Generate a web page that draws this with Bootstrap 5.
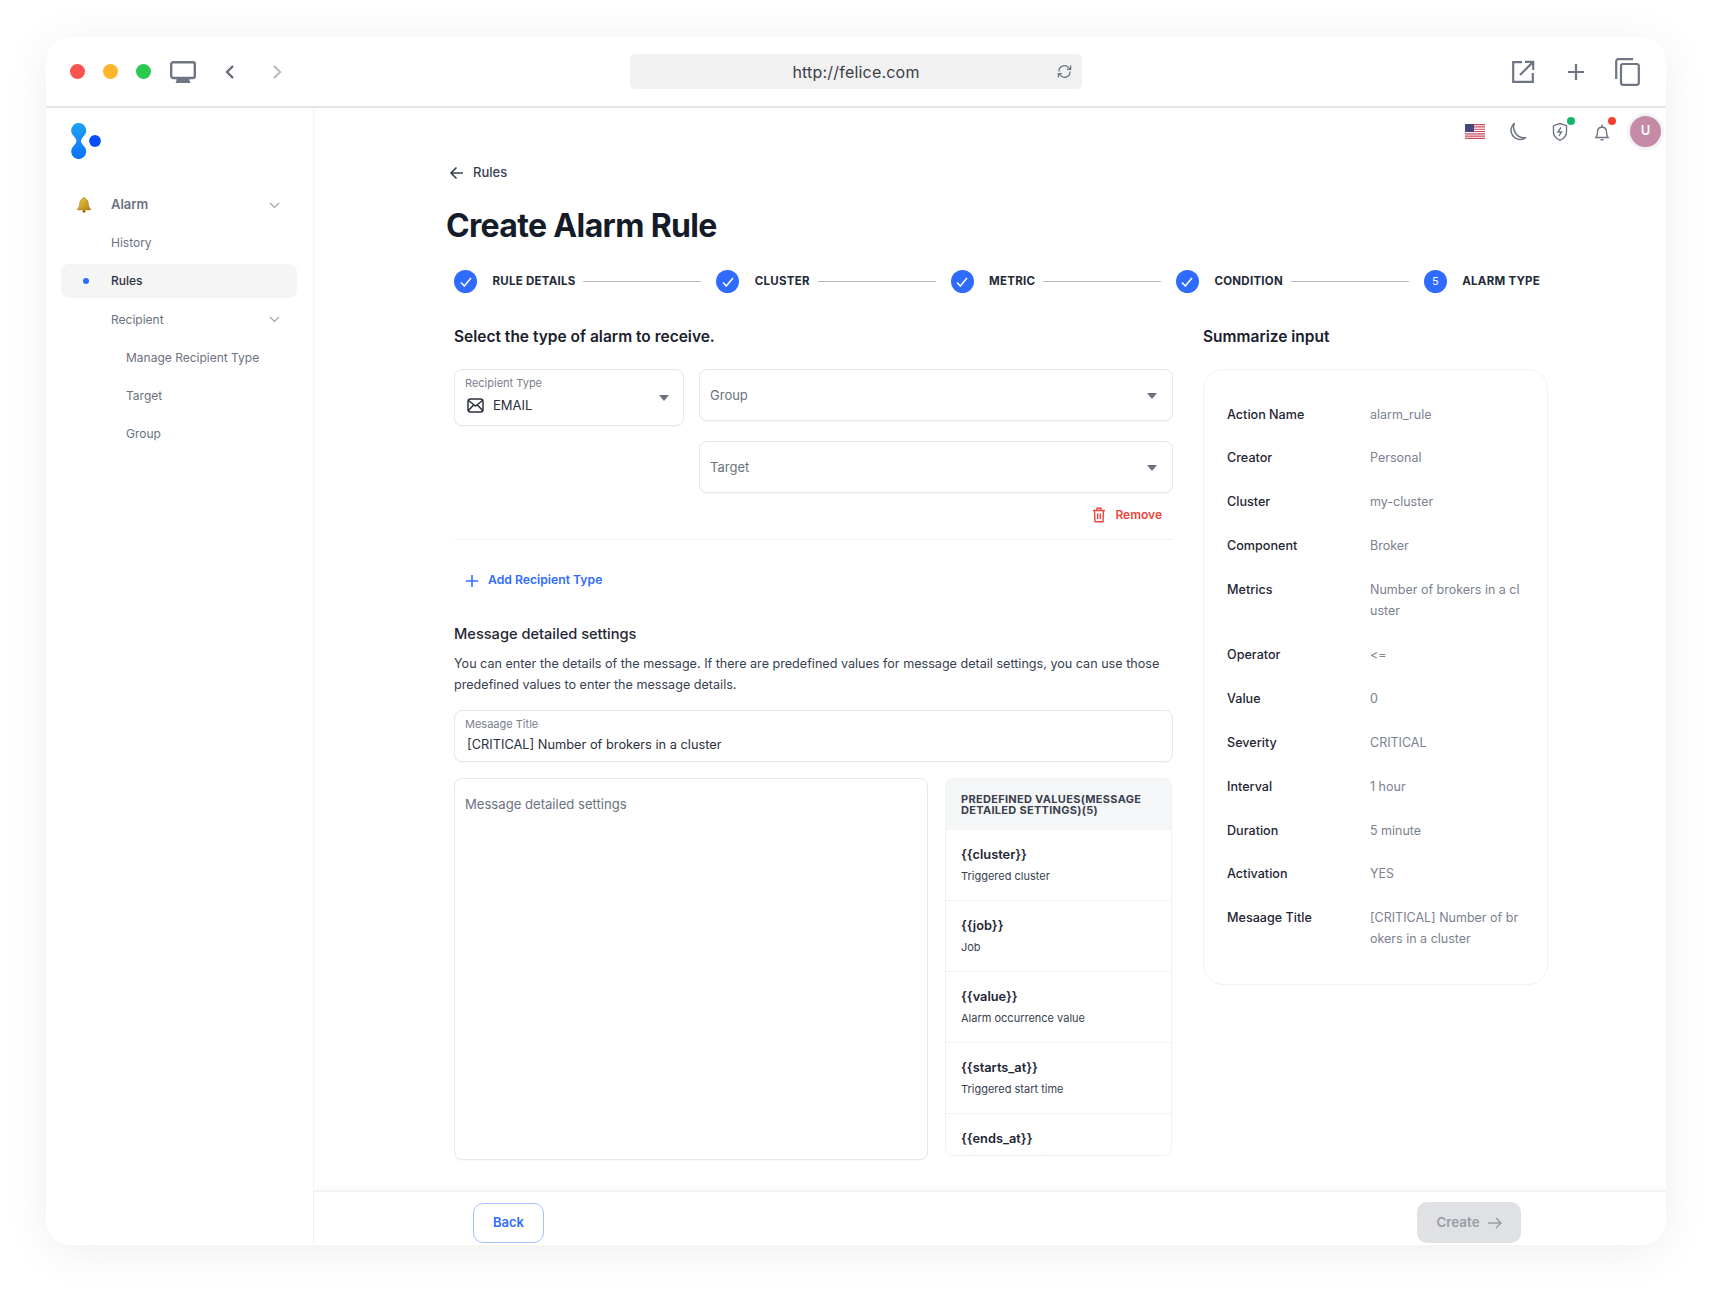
<!DOCTYPE html>
<html lang="en">

<head>
  <meta charset="UTF-8" />
  <meta name="viewport" content="width=device-width, initial-scale=1" />
  <title>Create Alarm Rule</title>
  <link href="https://cdn.jsdelivr.net/npm/bootstrap@5.3.2/dist/css/bootstrap.min.css" rel="stylesheet" />
  <style>
    body {
      font-family: Inter, "Liberation Sans", sans-serif;
      background: #fff;
      color: #1a202c;
      height: 1300px;
      overflow: hidden;
    }

    /* Browser mockup */
    .browser-frame {
      width: 1620px;
      height: 1208px;
      margin: 37px 0 0 46px;
      border-radius: 24px;
      background: #fff;
      box-shadow: 0 6px 46px rgb(0 0 0 / 0.07);
      overflow: hidden;
    }

    .browser-bar {
      height: 71px;
      padding-left: 24px;
      border-bottom: 2px solid #e4e4e4;
    }

    .win-dot {
      width: 15px;
      height: 15px;
      border-radius: 50%;
      margin-right: 18px;
    }

    .address-box {
      position: relative;
      width: 452px;
      height: 35px;
      margin-left: 346px;
      background: #f1f1f1;
      border-radius: 5px;
      font-size: 16px;
      letter-spacing: .2px;
      color: #3c4048;
    }

    .address-box svg {
      position: absolute;
      right: 9px;
      top: 9px;
    }

    /* Sidebar */
    .side-col {
      width: 268px;
      flex: none;
      border-right: 1px solid #f3f3f5;
    }

    .side-logo {
      margin: 15px 0 0 25px;
      height: 36px;
    }

    .side-menu {
      margin: 29px 0 0 15px;
      width: 236px;
      font-size: 12px;
      color: #6b7280;
    }

    .side-item {
      height: 34px;
      margin-bottom: 4.2px;
      padding-left: 50px;
      padding-right: 13px;
      position: relative;
      border-radius: 8px;
    }

    .side-item.sub {
      padding-left: 65px;
    }

    .side-item.top-item {
      font-size: 13px;
      font-weight: 600;
    }

    .side-item.selected {
      background: #f5f5f6;
      color: #2d3340;
      font-weight: 500;
    }

    .side-item.selected::before {
      content: "";
      position: absolute;
      left: 22px;
      top: 14px;
      width: 6px;
      height: 6px;
      border-radius: 50%;
      background: #2f6bff;
    }

    /* Main */
    .main-col {
      min-width: 0;
    }

    .top-tools {
      height: 46px;
      padding-right: 2px;
    }

    .avatar-u {
      width: 37px;
      height: 37px;
      margin-left: 14px;
      border-radius: 50%;
      background: #c58aa6;
      border: 3px solid #f1f3f7;
      color: #fff;
      font-size: 13px;
      font-weight: 600;
    }

    .tool-icon {
      position: relative;
      width: 20px;
      height: 22px;
      margin-top: -3px;
    }

    .tool-dot {
      position: absolute;
      width: 8px;
      height: 8px;
      border-radius: 50%;
      right: -5px;
      top: -2px;
    }

    .page-area {
      padding-left: 133px;
      width: 1240px;
    }

    .back-link {
      font-size: 13px;
      font-weight: 500;
      color: #374151;
      height: 22px;
      margin: 8px 0 0 2px;
    }

    .page-title {
      font-size: 32px;
      font-weight: 700;
      letter-spacing: -.65px;
      color: #141b29;
      line-height: 40px;
      margin: 22px 0 0 -1px;
    }

    .step-row {
      margin: 24px 0 0 7px;
      height: 23px;
      width: 1086px;
    }

    .step-num {
      width: 23px;
      height: 23px;
      flex: none;
      border-radius: 50%;
      background: #2f6bff;
      color: #fff;
      font-size: 11px;
      margin-right: 15.5px;
    }

    .step-name {
      font-size: 11.5px;
      font-weight: 700;
      letter-spacing: .25px;
      color: #232a38;
      white-space: nowrap;
    }

    .step-line {
      flex: 1;
      height: 1px;
      margin: 0 15px 0 8px;
      background: #b4b7bd;
    }

    .form-part {
      width: 719px;
      flex: none;
    }

    .sum-part {
      width: 345px;
      flex: none;
      margin-left: 30px;
    }

    .section-head {
      font-size: 15.5px;
      font-weight: 600;
      color: #1a202c;
      line-height: 22px;
      margin: 0 0 20.5px;
    }

    .body-wrap {
      margin: 33px 0 0 7px;
    }

    .field-box {
      border: 1px solid #e6e7eb;
      border-radius: 8px;
      background: #fff;
      box-shadow: 0 1px 1px rgb(0 0 0 / 0.03);
      position: relative;
    }

    .field-cap {
      font-size: 11px;
      color: #7a808c;
      line-height: 14px;
    }

    .pick-select {
      height: 52px;
      font-size: 13px;
      color: #6b7280;
      border-color: #e6e7eb;
      border-radius: 8px;
      padding: 8px 36px 6px 10px;
      box-shadow: 0 1px 1px rgb(0 0 0 / 0.03);
      background-image: none;
    }

    .caret-down {
      position: absolute;
      right: 16px;
      top: 24px;
      width: 0;
      height: 0;
      border-left: 5px solid transparent;
      border-right: 5px solid transparent;
      border-top: 6px solid #6b7280;
      pointer-events: none;
    }

    .caret-down.in-type {
      right: 14px;
      top: 25px;
    }

    .remove-link {
      font-size: 12px;
      font-weight: 600;
      color: #f0443a;
      height: 20px;
      margin-top: 12px;
      padding-right: 11px;
    }

    .dot-rule {
      border-top: 1px dotted #e3e4e8;
      margin: 14.5px 0 0;
    }

    .add-link {
      font-size: 12.2px;
      font-weight: 600;
      color: #2f6bff;
      height: 20px;
      margin: 30.5px 0 0 12px;
    }

    .msg-head {
      font-size: 14.6px;
      font-weight: 500;
      color: #1f2633;
      margin: 32px 0 0;
      line-height: 22px;
    }

    .msg-text {
      font-size: 12.6px;
      line-height: 21px;
      color: #374151;
      margin: 8px 0 0;
    }

    .title-input {
      height: 52px;
      margin-top: 15px;
      padding: 6px 10px 0;
    }

    .title-value {
      font-size: 12.8px;
      color: #2a303c;
      line-height: 20px;
      margin: 4px 0 0 2px;
    }

    .msg-area {
      width: 474px;
      height: 382px;
      flex: none;
      resize: none;
      border-color: #e6e7eb;
      border-radius: 8px;
      padding: 16px 10px;
      font-size: 13.1px;
      box-shadow: 0 1px 1px rgb(0 0 0 / 0.03);
    }

    .msg-area::placeholder {
      color: #6b7280;
    }

    .value-panel {
      width: 227px;
      height: 378px;
      margin-left: 17px;
      flex: none;
      border: 1px solid #f0f1f3;
      border-radius: 8px;
      overflow: hidden;
    }

    .value-head {
      height: 51px;
      background: #f5f6f8;
      padding: 15px 12px 0 15px;
      font-size: 11px;
      line-height: 11.5px;
      font-weight: 700;
      letter-spacing: .3px;
      color: #3a414e;
    }

    .value-row {
      height: 71px;
      padding: 15px 15px 0;
      border-color: #f2f3f5;
    }

    .value-key {
      font-size: 12.8px;
      font-weight: 600;
      color: #1f2633;
      line-height: 20px;
    }

    .value-desc {
      font-size: 11px;
      color: #374151;
      line-height: 16px;
      margin-top: 3px;
    }

    .sum-box {
      border: 1px solid #f1f2f4;
      border-radius: 20px;
      height: 616px;
      padding: 34px 23px;
    }

    .sum-row {
      margin-bottom: 22.9px;
      font-size: 12.6px;
      line-height: 21px;
    }

    .sum-key {
      width: 143px;
      flex: none;
      font-weight: 500;
      color: #1f2633;
    }

    .sum-val {
      width: 150px;
      font-size: 12.5px;
      color: #7b8190;
      word-break: break-all;
    }

    .foot-bar {
      height: 55px;
      flex: none;
      border-top: 2px solid #f3f3f4;
      box-shadow: 0 -3px 6px rgb(0 0 0 / 0.02);
      padding: 10px 145px 0 159px;
    }

    .back-btn {
      width: 71px;
      height: 40px;
      margin-top: 1px;
      border: 1px solid #a9c2ff;
      border-radius: 10px;
      background: #fff;
      color: #2f6bff;
      font-size: 13px;
      font-weight: 600;
      padding: 0;
    }

    .create-btn {
      width: 104px;
      height: 41px;
      border: 0;
      border-radius: 10px;
      background: #e0e1e5;
      color: #9a9ca5;
      font-size: 13.4px;
      font-weight: 600;
      padding: 0;
    }
  </style>
</head>

<body>
  <div class="browser-frame d-flex flex-column">

    <!-- browser toolbar -->
    <div class="browser-bar d-flex align-items-center flex-none">
      <span class="win-dot" style="background:#f8534f"></span>
      <span class="win-dot" style="background:#fdb52a"></span>
      <span class="win-dot" style="background:#2bc94f"></span>
      <svg width="26" height="22" viewBox="0 0 26 22" style="margin-left:1px">
        <rect x="1.200" y="1.200" width="23.600" height="15.800" rx="2" fill="none" stroke="#6f7683" stroke-width="2.400" />
        <path d="M6.500 18h13v1.500l1 2.500h-15l1-2.500z" fill="#6f7683" />
      </svg>
      <svg width="12" height="16" viewBox="0 0 12 16" style="margin-left:27px">
        <path d="M10 2 4 8l6 6" fill="none" stroke="#5f6673" stroke-width="2.200" />
      </svg>
      <svg width="12" height="16" viewBox="0 0 12 16" style="margin-left:37px">
        <path d="M2 2l6 6-6 6" fill="none" stroke="#b9bcc2" stroke-width="2.200" />
      </svg>
      <div class="address-box d-flex align-items-center justify-content-center">
        http://felice.com
        <svg width="17" height="17" viewBox="0 0 17 17" fill="none" stroke="#6f7683" stroke-width="1.300">
          <path d="M3 8.500A5.500 5.500 0 0 1 12.600 4.600L14 6" />
          <path d="M14 8.500A5.500 5.500 0 0 1 4.400 12.400L3 11" />
          <path d="M14.600 2.600V6.400H11M2.400 14.400V10.600H6" />
        </svg>
      </div>
      <div class="ms-auto d-flex align-items-center">
        <svg width="24" height="24" viewBox="0 0 24 24" fill="none" stroke="#6f7683" stroke-width="2.200">
          <path d="M11 2.200H2.200v19.600h19.600V13" />
          <path d="M9 15 21.600 2.400M14 1.800h8.200V10" />
        </svg>
        <svg width="18" height="18" viewBox="0 0 18 18" style="margin-left:32px" stroke="#6f7683" stroke-width="2.200">
          <path d="M9 1v16M1 9h16" />
        </svg>
        <svg width="25" height="28" viewBox="0 0 25 28" fill="none" stroke="#6f7683" stroke-width="2.200"
          style="margin-left:30px;margin-right:26px">
          <path d="M1.200 21V3.200a2 2 0 0 1 2-2H18" />
          <rect x="6" y="6" width="17.800" height="20.800" rx="2" />
        </svg>
      </div>
    </div>

    <div class="d-flex flex-grow-1" style="min-height:0">

      <!-- sidebar -->
      <aside class="side-col">
        <div class="side-logo">
          <svg width="30" height="36" viewBox="0 0 30 36">
            <defs>
              <linearGradient id="logoA" x1="0" y1="0" x2="0" y2="1">
                <stop offset="0" stop-color="#1ea3f5" />
                <stop offset="1" stop-color="#0a72fb" />
              </linearGradient>
              <linearGradient id="bellGold" x1="0" y1="0" x2="1" y2="1">
                <stop offset="0" stop-color="#f0c84a" />
                <stop offset="1" stop-color="#b0820f" />
              </linearGradient>
            </defs>
            <path fill="url(#logoA)" d="M7.700 0A7.500 7.500 0 0 1 13.500 12.200C11 15 10 16 10 18C10 20 11 21 13.500 23.800A7.500 7.500 0 1 1 1.900 23.800C4.400 21 5.400 20 5.400 18C5.400 16 4.400 15 1.900 12.200A7.500 7.500 0 0 1 7.700 0Z" />
            <circle cx="24" cy="18" r="5.900" fill="#0a4dfb" />
          </svg>
        </div>
        <nav class="side-menu d-flex flex-column">
          <div class="side-item top-item d-flex align-items-center">
            <svg width="16" height="16" viewBox="0 0 16 16" style="position:absolute;left:15px;top:9px">
              <path d="M8 .5c1 0 1.300.7 1.300 1.300 2.200.7 2.900 2.500 3 4.700.1 2.500 1 4.200 2.200 5.400v1H1.500v-1c1.200-1.200 2.100-2.900 2.200-5.400.1-2.200.8-4 3-4.700C6.700 1.200 7 .5 8 .5z" fill="url(#bellGold)" stroke="#9a7414" stroke-width=".5" />
              <circle cx="8" cy="14.300" r="1.500" fill="#9a7414" />
            </svg>
            Alarm
            <svg width="11" height="7" viewBox="0 0 11 7" class="ms-auto" style="margin-right:4px">
              <path d="M1 1l4.500 4.500L10 1" fill="none" stroke="#9ca3af" stroke-width="1.200" />
            </svg>
          </div>
          <div class="side-item d-flex align-items-center">History</div>
          <div class="side-item selected d-flex align-items-center">Rules</div>
          <div class="side-item d-flex align-items-center">Recipient
            <svg width="11" height="7" viewBox="0 0 11 7" class="ms-auto" style="margin-right:4px">
              <path d="M1 1l4.500 4.500L10 1" fill="none" stroke="#9ca3af" stroke-width="1.200" />
            </svg>
          </div>
          <div class="side-item sub d-flex align-items-center">Manage Recipient Type</div>
          <div class="side-item sub d-flex align-items-center">Target</div>
          <div class="side-item sub d-flex align-items-center">Group</div>
        </nav>
      </aside>

      <main class="main-col flex-grow-1 d-flex flex-column">
        <div class="flex-grow-1">
          <!-- app top icons -->
          <div class="top-tools d-flex align-items-center justify-content-end">
            <svg width="20" height="15" viewBox="0 0 20 15">
              <rect width="20" height="15" fill="#fff" />
              <path d="M0 .6h20M0 2.900h20M0 5.200h20M0 7.500h20M0 9.800h20M0 12.100h20M0 14.400h20" stroke="#c9475a" stroke-width="1.150" />
              <rect width="9" height="8" fill="#45477e" />
            </svg>
            <span class="tool-icon" style="margin-left:22px">
              <svg width="20" height="22" viewBox="0 0 20 22" fill="none" stroke="#6f7683" stroke-width="1.500">
                <path d="M7.500 2A9 9 0 1 0 19 16.500 10.500 10.500 0 0 1 7.500 2z" />
              </svg>
            </span>
            <span class="tool-icon" style="margin-left:24px">
              <svg width="18" height="22" viewBox="0 0 18 22" fill="none" stroke="#6f7683" stroke-width="1.400">
                <path d="M9 2.500l6.500 2.200v6.300c0 4-2.800 6.700-6.500 8.300-3.700-1.600-6.500-4.300-6.500-8.300V4.700z" />
                <path d="M10 6.500 7 11h3.500L8 15" />
              </svg>
              <span class="tool-dot" style="background:#12b76a;right:-4px"></span>
            </span>
            <span class="tool-icon" style="margin-left:22px">
              <svg width="18" height="22" viewBox="0 0 18 22" fill="none" stroke="#6f7683" stroke-width="1.400">
                <path d="M3 16.500c1.200-1.500 1.400-3 1.500-5.500.1-2.800 1.800-4.700 4.500-4.700s4.400 1.900 4.500 4.700c.1 2.500.3 4 1.500 5.500z" />
                <path d="M9 3.500v2.500M7.500 18.800h3" />
              </svg>
              <span class="tool-dot" style="background:#f5402f;right:-3px"></span>
            </span>
            <span class="avatar-u d-flex align-items-center justify-content-center">U</span>
          </div>

          <div class="page-area">
            <div class="back-link d-flex align-items-center">
              <svg width="15" height="14" viewBox="0 0 15 14" fill="none" stroke="#374151" stroke-width="1.600" style="margin-right:9px">
                <path d="M14 7H2M7.500 1.500 2 7l5.500 5.500" />
              </svg>
              <span>Rules</span>
            </div>
            <h1 class="page-title">Create Alarm Rule</h1>

            <!-- stepper -->
            <div class="step-row d-flex align-items-center" id="stepRow"></div>

            <div class="body-wrap d-flex">
              <div class="form-part">
                <h2 class="section-head">Select the type of alarm to receive.</h2>

                <div class="d-flex align-items-start">
                  <div class="field-box" style="width:230px;height:57px;padding:6px 10px;flex:none">
                    <div class="field-cap">Recipient Type</div>
                    <div class="d-flex align-items-center" style="font-size:13px;color:#2a303c;margin-top:6px">
                      <svg width="17" height="15" viewBox="0 0 17 15" fill="none" stroke="#2a303c" stroke-width="1.500" style="margin:0 9px 0 2px">
                        <rect x="1" y="1" width="15" height="13" rx="2.500" />
                        <path d="M1.500 2.500 8.500 8l7-5.500M1.500 12.500l5-5.500M15.500 12.500l-5-5.500" />
                      </svg>
                      EMAIL
                    </div>
                    <span class="caret-down in-type"></span>
                  </div>
                  <div class="flex-grow-1" style="margin-left:15px">
                    <div class="position-relative">
                      <select class="form-select pick-select">
                        <option>Group</option>
                      </select>
                      <span class="caret-down"></span>
                    </div>
                    <div class="position-relative" style="margin-top:20px">
                      <select class="form-select pick-select">
                        <option>Target</option>
                      </select>
                      <span class="caret-down"></span>
                    </div>
                  </div>
                </div>

                <div class="remove-link d-flex align-items-center justify-content-end">
                  <svg width="14" height="16" viewBox="0 0 14 16" fill="none" stroke="#f0443a" stroke-width="1.400" style="margin-right:9px">
                    <path d="M1 3.500h12M5 3V1.200h4V3M2.500 3.500 3 14.800h8l.5-11.300M5.700 6.500v5.500M8.300 6.500v5.500" />
                  </svg>
                  <span>Remove</span>
                </div>
                <div class="dot-rule"></div>

                <div class="add-link d-flex align-items-center">
                  <svg width="12" height="12" viewBox="0 0 12 12" stroke="#2f6bff" stroke-width="1.500" style="margin-right:10px">
                    <path d="M6 0v12M0 6h12" />
                  </svg>
                  Add Recipient Type
                </div>

                <h3 class="msg-head">Message detailed settings</h3>
                <p class="msg-text">You can enter the details of the message. If there are predefined values for message detail settings, you can use those predefined values to enter the message details.</p>

                <div class="field-box title-input">
                  <div class="field-cap">Mesaage Title</div>
                  <div class="title-value">[CRITICAL] Number of brokers in a cluster</div>
                </div>

                <div class="d-flex align-items-start" style="margin-top:16px">
                  <textarea class="form-control msg-area" placeholder="Message detailed settings"></textarea>
                  <div class="value-panel">
                    <div class="value-head text-uppercase">Predefined values(message detailed settings)(5)</div>
                    <div class="list-group list-group-flush" id="valueList"></div>
                  </div>
                </div>
              </div>

              <div class="sum-part">
                <h2 class="section-head">Summarize input</h2>
                <div class="sum-box" id="sumBox"></div>
              </div>
            </div>
          </div>
        </div>

        <div class="foot-bar d-flex justify-content-between align-items-start">
          <button type="button" class="btn back-btn">Back</button>
          <button type="button" class="btn create-btn d-flex align-items-center justify-content-center">
            Create
            <svg width="14" height="12" viewBox="0 0 14 12" fill="none" stroke="#9a9ca5" stroke-width="1.500" class="ms-2">
              <path d="M0 6h13M8 1l5 5-5 5" />
            </svg>
          </button>
        </div>
      </main>
    </div>
  </div>

  <script src="https://cdn.jsdelivr.net/npm/bootstrap@5.3.2/dist/js/bootstrap.bundle.min.js"></script>
  <script>
    const steps = ['Rule details', 'Cluster', 'Metric', 'Condition', 'Alarm type'];
    const check = '<svg width="12" height="10" viewBox="0 0 12 10" fill="none" stroke="#fff" stroke-width="1.500"><path d="M1 5.500 4.300 9 11 1"/></svg>';

    document.getElementById('stepRow').innerHTML = steps.map((s, i) => `
      <span class="step-num d-flex align-items-center justify-content-center">${i < 4 ? check : i + 1}</span>
      <span class="step-name text-uppercase">${s}</span>
      ${i < 4 ? '<span class="step-line"></span>' : ''}
    `).join('');

    const values = [
      ['{{cluster}}', 'Triggered cluster'],
      ['{{job}}', 'Job'],
      ['{{value}}', 'Alarm occurrence value'],
      ['{{starts_at}}', 'Triggered start time'],
      ['{{ends_at}}', 'Triggered end time']
    ];
    document.getElementById('valueList').innerHTML = values.map(v => `
      <div class="list-group-item value-row">
        <div class="value-key">${v[0]}</div>
        <div class="value-desc">${v[1]}</div>
      </div>
    `).join('');

    const summary = [
      ['Action Name', 'alarm_rule'],
      ['Creator', 'Personal'],
      ['Cluster', 'my-cluster'],
      ['Component', 'Broker'],
      ['Metrics', 'Number of brokers in a cluster'],
      ['Operator', '&lt;='],
      ['Value', '0'],
      ['Severity', 'CRITICAL'],
      ['Interval', '1 hour'],
      ['Duration', '5 minute'],
      ['Activation', 'YES'],
      ['Mesaage Title', '[CRITICAL] Number of brokers in a cluster']
    ];
    document.getElementById('sumBox').innerHTML = summary.map(r => `
      <div class="sum-row d-flex">
        <div class="sum-key">${r[0]}</div>
        <div class="sum-val">${r[1]}</div>
      </div>
    `).join('');
  </script>
</body>

</html>
